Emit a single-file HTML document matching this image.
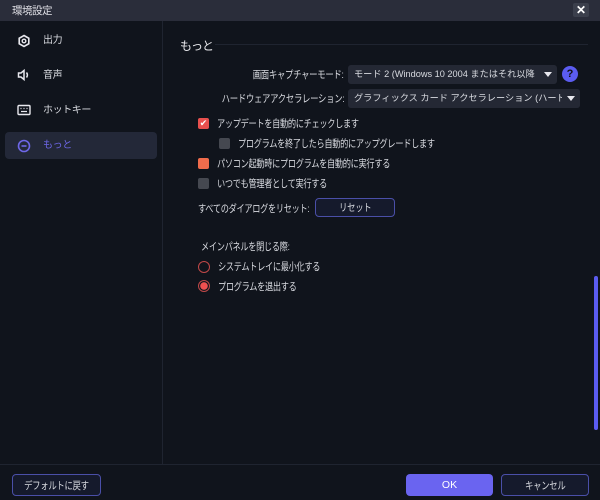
<!DOCTYPE html>
<html><head><meta charset="utf-8"><style>
*{margin:0;padding:0;box-sizing:border-box}
body{width:600px;height:500px;background:#10141c;color:#d8dae0;font-family:"Liberation Sans","Noto Sans CJK JP",sans-serif;font-size:10.5px;letter-spacing:-0.4px;position:relative;overflow:hidden}
.a{position:absolute;white-space:nowrap}
.t{transform:scaleX(0.78);transform-origin:left center}
.r{right:256px;transform:scaleX(0.8);transform-origin:right center}
.title{left:0;top:0;width:600px;height:21px;background:#2a2d3a}
.side{left:0;top:21px;width:163px;height:443px;border-right:1px solid #1f2430}
.nav{left:5px;width:152px;height:27px;border-radius:4px;font-size:10px;line-height:27px;padding-left:38px}
.cb{width:11px;height:11px;border-radius:2px}
.dd{height:19px;background:#242834;border-radius:3px;line-height:19px;padding-left:6px;font-size:9.2px;letter-spacing:0}
.btn{border:1.5px solid #4a4fa8;border-radius:4px;background:#151a2c;display:flex;align-items:center;justify-content:center}
.btn span{display:inline-block;transform:scaleX(0.8)}
.tri{position:absolute;right:5px;top:7px;width:0;height:0;border-left:4.5px solid transparent;border-right:4.5px solid transparent;border-top:5px solid #e8e8ee}
</style></head><body>
<div class="a title"></div>
<div class="a" style="left:12px;top:3px;font-size:10.5px;color:#e0e0e6;letter-spacing:-0.5px">環境設定</div>
<div class="a" style="left:573px;top:3px;width:16px;height:14px;background:#3b3f4c;border-radius:2px;color:#fff;font-size:12px;text-align:center;line-height:14px;font-weight:bold;letter-spacing:0">✕</div>
<div class="a side"></div>
<div class="a nav" style="top:27px">出力</div>
<div class="a nav" style="top:62px">音声</div>
<div class="a nav" style="top:97px">ホットキー</div>
<div class="a nav" style="top:132px;background:#232838;color:#6e67e8">もっと</div>
<svg class="a" style="left:17px;top:34px" width="14" height="14" viewBox="0 0 14 14"><path d="M7 1.5l4.8 2.75v5.5L7 12.5l-4.8-2.75v-5.5z" fill="none" stroke="#e8e8ee" stroke-width="1.6"/><circle cx="7" cy="7" r="1.8" fill="none" stroke="#e8e8ee" stroke-width="1.4"/></svg>
<svg class="a" style="left:17px;top:68px" width="14" height="14" viewBox="0 0 14 14"><path d="M1.5 5h2.5l3-2.5v9L4 9H1.5z" fill="none" stroke="#e8e8ee" stroke-width="1.5"/><path d="M9.5 4.5q1.8 2.5 0 5" fill="none" stroke="#e8e8ee" stroke-width="1.5"/></svg>
<svg class="a" style="left:17px;top:104px" width="14" height="12" viewBox="0 0 14 12"><rect x="1" y="1.5" width="12" height="9" rx="1" fill="none" stroke="#e8e8ee" stroke-width="1.4"/><path d="M3.5 4.5h1M6.5 4.5h1M9.5 4.5h1M4 7.5h6" stroke="#e8e8ee" stroke-width="1.3"/></svg>
<svg class="a" style="left:17px;top:139px" width="14" height="14" viewBox="0 0 14 14"><circle cx="7" cy="7" r="5.5" fill="none" stroke="#6e67e8" stroke-width="1.6"/><path d="M4.5 7h5" stroke="#6e67e8" stroke-width="1.6"/></svg>

<div class="a" style="left:180px;top:37px;font-size:12px;color:#e6e6ea;letter-spacing:-1px">もっと</div>
<div class="a" style="left:215px;top:44px;width:373px;height:1px;background:#1f2430"></div>
<div class="a r" style="top:67px">画面キャプチャーモード:</div>
<div class="a dd" style="left:348px;top:65px;width:209px">モード 2 (Windows 10 2004 またはそれ以降<span class="tri"></span></div>
<div class="a" style="left:562px;top:66px;width:16px;height:16px;border-radius:50%;background:#5b5cf0;color:#111;font-weight:bold;font-size:11px;text-align:center;line-height:16px;letter-spacing:0">?</div>
<div class="a r" style="top:91px">ハードウェアアクセラレーション:</div>
<div class="a dd" style="left:348px;top:89px;width:232px;overflow:hidden">グラフィックス カード アクセラレーション (ハードウェア :<span style="position:absolute;right:0;top:0;width:18px;height:19px;background:#242834"></span><span class="tri"></span></div>
<div class="a cb" style="left:198px;top:118px;background:#e8504e;color:#fff;font-size:9px;line-height:11px;text-align:center;letter-spacing:0">✔</div>
<div class="a t" style="left:217px;top:116px">アップデートを自動的にチェックします</div>
<div class="a cb" style="left:219px;top:138px;background:#454850"></div>
<div class="a t" style="left:238px;top:136px">プログラムを終了したら自動的にアップグレードします</div>
<div class="a cb" style="left:198px;top:158px;background:#f06c4c"></div>
<div class="a t" style="left:217px;top:156px">パソコン起動時にプログラムを自動的に実行する</div>
<div class="a cb" style="left:198px;top:178px;background:#454850"></div>
<div class="a t" style="left:217px;top:176px">いつでも管理者として実行する</div>
<div class="a t" style="left:198px;top:201px">すべてのダイアログをリセット:</div>
<div class="a btn" style="left:315px;top:198px;width:80px;height:19px"><span>リセット</span></div>
<div class="a t" style="left:201px;top:239px">メインパネルを閉じる際:</div>
<div class="a" style="left:198px;top:261px;width:12px;height:12px;border-radius:50%;border:1.5px solid #c04848"></div>
<div class="a t" style="left:218px;top:259px">システムトレイに最小化する</div>
<div class="a" style="left:198px;top:280px;width:12px;height:12px;border-radius:50%;border:1.5px solid #c04848;background:radial-gradient(circle,#f05050 3.5px,transparent 4px)"></div>
<div class="a t" style="left:218px;top:279px">プログラムを退出する</div>
<div class="a" style="left:594px;top:276px;width:4px;height:154px;border-radius:2px;background:#5b5cf0"></div>
<div class="a" style="left:0;top:464px;width:600px;height:1px;background:#1f2430"></div>
<div class="a btn" style="left:12px;top:474px;width:89px;height:22px"><span>デフォルトに戻す</span></div>
<div class="a" style="left:406px;top:474px;width:87px;height:22px;line-height:22px;border-radius:4px;background:#6a64f0;color:#fff;text-align:center;letter-spacing:0">OK</div>
<div class="a btn" style="left:501px;top:474px;width:88px;height:22px"><span>キャンセル</span></div>
</body></html>
